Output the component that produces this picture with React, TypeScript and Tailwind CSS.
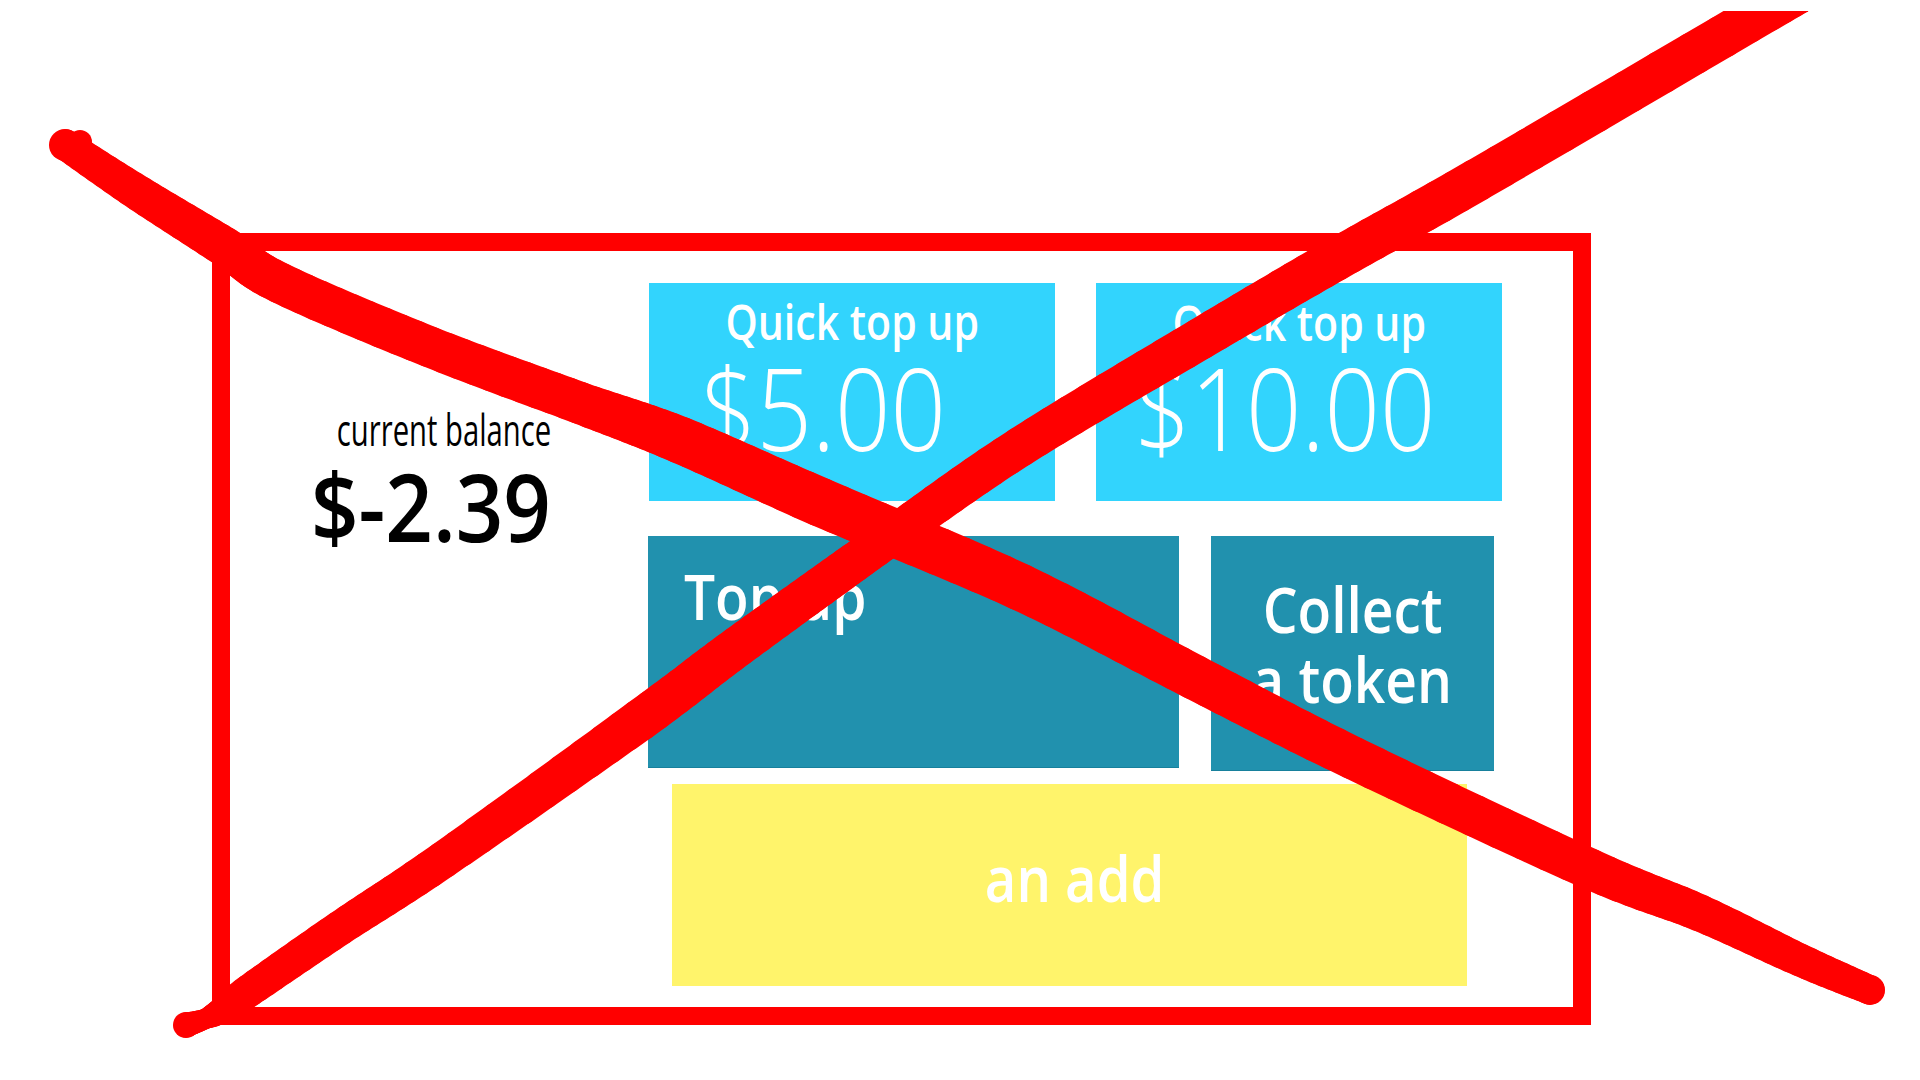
import React from "react";

type P = [number, number, number];
type S = { x: number; y: number; w: number };

function sample(pts: P[], samples = 10): S[] {
  const out: S[] = [];
  for (let i = 0; i < pts.length - 1; i++) {
    const p0 = pts[Math.max(0, i - 1)];
    const p1 = pts[i];
    const p2 = pts[i + 1];
    const p3 = pts[Math.min(pts.length - 1, i + 2)];
    for (let s = 0; s < samples; s++) {
      const t = s / samples;
      const t2 = t * t;
      const t3 = t2 * t;
      const f = (a: number, b: number, c: number, d: number) =>
        0.5 * (2 * b + (-a + c) * t + (2 * a - 5 * b + 4 * c - d) * t2 + (-a + 3 * b - 3 * c + d) * t3);
      out.push({
        x: f(p0[0], p1[0], p2[0], p3[0]),
        y: f(p0[1], p1[1], p2[1], p3[1]),
        w: p1[2] + (p2[2] - p1[2]) * t,
      });
    }
  }
  const last = pts[pts.length - 1];
  out.push({ x: last[0], y: last[1], w: last[2] });
  return out;
}

function Stroke({ pts, k = 1 }: { pts: P[]; k?: number }) {
  const s = sample(pts);
  const segs = [];
  for (let i = 0; i < s.length - 1; i++) {
    segs.push(
      <line
        key={i}
        x1={s[i].x}
        y1={s[i].y}
        x2={s[i + 1].x}
        y2={s[i + 1].y}
        stroke="#ff0000"
        strokeWidth={((s[i].w + s[i + 1].w) / 2) * k}
        strokeLinecap="round"
      />
    );
  }
  return <g>{segs}</g>;
}

const strokeA: P[] = [
  [66, 145, 31],
  [140, 194, 36],
  [225, 247, 40],
  [280, 283, 41],
  [430, 347, 41],
  [580, 403, 42],
  [680, 440, 47],
  [820, 502, 49],
  [1020, 587, 47],
  [1194, 677, 45],
  [1353, 758, 43],
  [1590, 869, 41],
  [1700, 913, 37],
  [1800, 960, 33],
  [1870, 990, 29],
];

const strokeB: P[] = [
  [186, 1025, 25],
  [205, 1019, 20],
  [222, 1010, 26],
  [250, 990, 33],
  [340, 928, 35],
  [443, 860, 37],
  [640, 720, 42],
  [729, 653, 41],
  [820, 587, 40],
  [893, 535, 39],
  [1020, 447, 40],
  [1200, 339, 42],
  [1335, 260, 43],
  [1477, 180, 43],
  [1766, 11, 43],
  [1800, -9, 43],
];

function RedX() {
  return (
    <svg
      className="absolute left-0 top-0 pointer-events-none"
      width={1920}
      height={1080}
      viewBox="0 0 1920 1080"
    >
      <defs>
        <clipPath id="clipTop">
          <rect x={0} y={11} width={1920} height={1069} />
        </clipPath>
      </defs>
      <Stroke pts={strokeA} />
      <circle cx={65} cy={145} r={16} fill="#ff0000" />
      <circle cx={80} cy={142} r={12} fill="#ff0000" />
      <circle cx={1870} cy={990} r={15} fill="#ff0000" />
      <g clipPath="url(#clipTop)">
        <Stroke pts={strokeB} />
      </g>
      <circle cx={186} cy={1025} r={13} fill="#ff0000" />
    </svg>
  );
}

export default function App() {
  return (
    <div className="relative w-[1920px] h-[1080px] bg-white overflow-hidden font-['Open_Sans',sans-serif]">
      <div className="pl-[212px] pt-[233px]">
        <div className="w-[1379px] h-[792px] border-[18px] border-[#ff0000] flex">
          <div className="w-[321px] shrink-0 pt-[157px] text-right text-black">
            <div className="text-[43px] leading-[43px] font-normal">
              <span className="inline-block origin-right scale-x-[0.68]">current balance</span>
            </div>
            <div className="mt-[7px] text-[95px] leading-[95px] font-semibold">
              <span className="inline-block origin-right scale-x-[0.876]">$-2.39</span>
            </div>
          </div>
          <div className="flex flex-col pt-[32px]">
            <div className="flex ml-[98px] gap-[41px]">
              <div className="w-[406px] h-[218px] bg-[#32d4fd] text-white flex flex-col pt-[15px]">
                <div className="text-center text-[48px] leading-[48px] font-semibold">
                  <span className="inline-block scale-x-[0.855]">Quick top up</span>
                </div>
                <div className="mt-[3px] pl-[52px] text-[115px] leading-[115px] font-light whitespace-nowrap">
                  <span className="inline-block origin-left scale-x-[0.845]">$5.00</span>
                </div>
              </div>
              <div className="w-[406px] h-[218px] bg-[#32d4fd] text-white flex flex-col pt-[16px]">
                <div className="text-center text-[48px] leading-[48px] font-semibold">
                  <span className="inline-block scale-x-[0.855]">Quick top up</span>
                </div>
                <div className="mt-[2px] pl-[39px] text-[115px] leading-[115px] font-light whitespace-nowrap">
                  <span className="inline-block origin-left scale-x-[0.845]">$10.00</span>
                </div>
              </div>
            </div>
            <div className="flex items-start mt-[35px] ml-[97px] gap-[32px]">
              <div className="w-[531px] h-[232px] bg-[#2191ae] border-b border-[#17809c] text-white pt-[28px] pl-[36px]">
                <div className="text-[64px] leading-[64px] font-semibold whitespace-nowrap">
                  <span className="inline-block origin-left scale-x-[0.86]">Top up</span>
                </div>
              </div>
              <div className="w-[283px] h-[235px] bg-[#2191ae] border-b border-[#17809c] text-white pt-[38px] text-center">
                <div className="text-[64px] leading-[70px] font-semibold">
                  <span className="inline-block scale-x-[0.86]">Collect</span>
                </div>
                <div className="text-[64px] leading-[70px] font-semibold">
                  <span className="inline-block scale-x-[0.86]">a token</span>
                </div>
              </div>
            </div>
            <div className="mt-[13px] ml-[121px] w-[795px] h-[202px] bg-[#fff46b] text-white text-center pt-[62px] pl-[10px]">
              <div className="text-[64px] leading-[64px] font-semibold">
                <span className="inline-block scale-x-[0.85]">an add</span>
              </div>
            </div>
          </div>
        </div>
      </div>
      <RedX />
    </div>
  );
}
